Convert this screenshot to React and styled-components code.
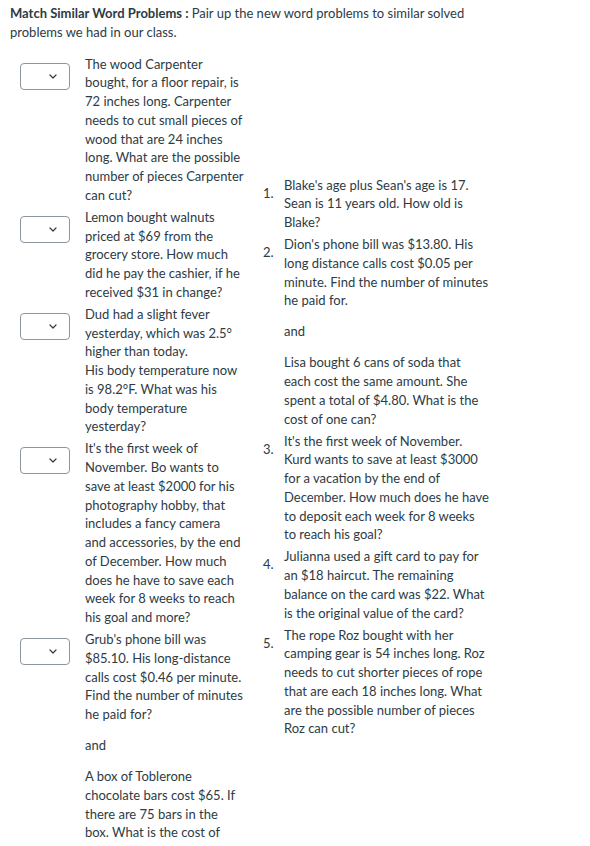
import React from 'react';
import styled, { createGlobalStyle } from 'styled-components';

const GlobalStyle = createGlobalStyle`
  body {
    margin: 0;
    background: #fff;
    font-family: Lato, "Noto Sans", sans-serif;
    color: #2d3b45;
  }
`;

const StyledPage = styled.div`
  width: 590px;
  font-size: 13px;
  line-height: 18.75px;
`;

const StyledHeader = styled.div`
  padding: 4px 10px 0 10px;
  width: 470px;
`;

const StyledTitle = styled.strong`
  font-weight: 700;
`;

const StyledBody = styled.div`
  display: flex;
  align-items: flex-start;
  margin-top: 13px;
`;

const StyledAnswers = styled.div`
  display: flex;
  flex-direction: column;
  gap: 3.25px;
  margin-left: 20px;
`;

const StyledAnswerRow = styled.div`
  display: flex;
  align-items: flex-start;
`;

const StyledSelect = styled.div`
  box-sizing: border-box;
  width: 50px;
  height: 27px;
  margin-top: 8px;
  border: 1px solid #8b969e;
  border-radius: 4px;
  background: #fff;
  display: flex;
  align-items: center;
  justify-content: flex-end;
  padding-right: 12px;
  flex-shrink: 0;
`;

const StyledAnswerText = styled.div`
  width: 159.5px;
  margin-left: 15px;
`;

const StyledPara = styled.p`
  margin: 0;

  & + & {
    margin-top: 12.25px;
  }
`;

const StyledPrompts = styled.ol`
  list-style: none;
  margin: 121px 0 0 18.5px;
  padding: 0;
  display: flex;
  flex-direction: column;
  gap: 3.25px;
`;

const StyledPrompt = styled.li`
  display: flex;
  align-items: flex-start;
`;

const StyledNumber = styled.span`
  width: 21px;
  flex-shrink: 0;
  padding-top: 8px;
`;

const StyledPromptText = styled.div`
  width: 205px;
`;

const Chevron = () => (
  <svg width="8" height="5" viewBox="0 0 8 5" fill="none">
    <path d="M1 1l3 3 3-3" stroke="#2d3b45" strokeWidth="1.2" strokeLinecap="round" strokeLinejoin="round" />
  </svg>
);

const answers = [
  [
    'The wood Carpenter bought, for a floor repair, is 72 inches long. Carpenter needs to cut small pieces of wood that are 24 inches long. What are the possible number of pieces Carpenter can cut?',
  ],
  ['Lemon bought walnuts priced at $69 from the grocery store. How much did he pay the cashier, if he received $31 in change?'],
  [
    <>
      Dud had a slight fever yesterday, which was 2.5° higher than today.
      <br />
      His body temperature now is 98.2°F. What was his body temperature yesterday?
    </>,
  ],
  [
    "It's the first week of November. Bo wants to save at least $2000 for his photography hobby, that includes a fancy camera and accessories, by the end of December. How much does he have to save each week for 8 weeks to reach his goal and more?",
  ],
  [
    "Grub's phone bill was $85.10. His long-distance calls cost $0.46 per minute. Find the number of minutes he paid for?",
    'and',
    'A box of Toblerone chocolate bars cost $65. If there are 75 bars in the box. What is the cost of one bar?',
  ],
];

const prompts = [
  ["Blake's age plus Sean's age is 17. Sean is 11 years old. How old is Blake?"],
  [
    "Dion's phone bill was $13.80. His long distance calls cost $0.05 per minute. Find the number of minutes he paid for.",
    'and',
    'Lisa bought 6 cans of soda that each cost the same amount. She spent a total of $4.80. What is the cost of one can?',
  ],
  [
    "It's the first week of November. Kurd wants to save at least $3000 for a vacation by the end of December. How much does he have to deposit each week for 8 weeks to reach his goal?",
  ],
  ['Julianna used a gift card to pay for an $18 haircut. The remaining balance on the card was $22. What is the original value of the card?'],
  [
    'The rope Roz bought with her camping gear is 54 inches long. Roz needs to cut shorter pieces of rope that are each 18 inches long. What are the possible number of pieces Roz can cut?',
  ],
];

const App = () => (
  <StyledPage>
    <GlobalStyle />
    <StyledHeader>
      <StyledTitle>Match Similar Word Problems : </StyledTitle>
      Pair up the new word problems to similar solved problems we had in our class.
    </StyledHeader>
    <StyledBody>
      <StyledAnswers>
        {answers.map((paras, i) => (
          <StyledAnswerRow key={i}>
            <StyledSelect>
              <Chevron />
            </StyledSelect>
            <StyledAnswerText>
              {paras.map((p, j) => (
                <StyledPara key={j}>{p}</StyledPara>
              ))}
            </StyledAnswerText>
          </StyledAnswerRow>
        ))}
      </StyledAnswers>
      <StyledPrompts>
        {prompts.map((paras, i) => (
          <StyledPrompt key={i}>
            <StyledNumber>{i + 1}.</StyledNumber>
            <StyledPromptText>
              {paras.map((p, j) => (
                <StyledPara key={j}>{p}</StyledPara>
              ))}
            </StyledPromptText>
          </StyledPrompt>
        ))}
      </StyledPrompts>
    </StyledBody>
  </StyledPage>
);

export default App;
